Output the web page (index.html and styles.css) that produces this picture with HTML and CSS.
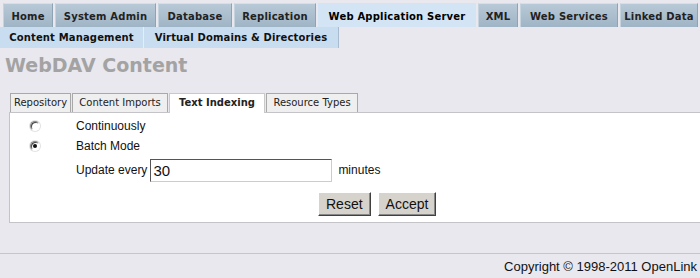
FILE: index.html
```html
<!DOCTYPE html>
<html lang="en">
<head>
    <meta charset="UTF-8">
    <title>WebDAV Content</title>
    <link rel="stylesheet" href="styles.css">
</head>
<body>
<div class="page">
    <ul class="tabs">
        <li>Home</li>
        <li>System Admin</li>
        <li>Database</li>
        <li>Replication</li>
        <li class="active">Web Application Server</li>
        <li>XML</li>
        <li>Web Services</li>
        <li>Linked Data</li>
    </ul>
    <ul class="subtabs">
        <li>Content Management</li>
        <li>Virtual Domains &amp; Directories</li>
    </ul>

    <h1 class="title">WebDAV Content</h1>

    <ul class="pagetabs">
        <li>Repository</li>
        <li>Content Imports</li>
        <li class="active">Text Indexing</li>
        <li>Resource Types</li>
    </ul>
    <div class="panel">
        <div class="row">
            <span class="radio"></span>
            <span>Continuously</span>
        </div>
        <div class="row">
            <span class="radio checked"></span>
            <span>Batch Mode</span>
        </div>
        <div class="row update">
            <span>Update every</span>
            <span class="field">30</span>
            <span>minutes</span>
        </div>
        <div class="buttons">
            <span class="btn">Reset</span>
            <span class="btn">Accept</span>
        </div>
    </div>

    <div class="footer">Copyright &copy; 1998-2011 OpenLink</div>
</div>
</body>
</html>
```

FILE: styles.css
```css
html,
body {
    margin: 0;
    padding: 0;
    overflow: hidden;
    background: #e9e8ee;
}

.page {
    width: 700px;
    padding-top: 3px;
}

/* top navigation */
.tabs,
.subtabs,
.pagetabs {
    list-style: none;
    margin: 0;
    padding: 0;
    display: flex;
}

.tabs {
    padding-left: 3px;
    gap: 2px;
}

.tabs li {
    flex: 0 0 auto;
    font-family: "DejaVu Sans", Verdana, sans-serif;
    font-weight: bold;
    font-size: 10px;
    letter-spacing: 0.2px;
    color: #222;
    height: 24px;
    line-height: 24px;
    padding-top: 1px;
    text-align: center;
    white-space: nowrap;
    box-sizing: border-box;
    background: linear-gradient(#b8c9d7, #9fb4c5);
    border-top: 1px solid #d4dfe8;
    border-left: 1px solid #c5d3de;
    border-right: 1px solid #8ea3b4;
}

.tabs li:nth-child(1) { width: 50px; }
.tabs li:nth-child(2) { width: 101px; }
.tabs li:nth-child(3) { width: 74px; }
.tabs li:nth-child(4) { width: 82px; }
.tabs li:nth-child(5) { width: 158px; }
.tabs li:nth-child(6) { width: 40px; }
.tabs li:nth-child(7) { width: 98px; }
.tabs li:nth-child(8) { width: 78px; }

.tabs li.active {
    background: #d3e5f4;
    border-color: #d3e5f4;
    color: #000;
}

.subtabs {
    height: 21px;
}

.subtabs li {
    font-family: "DejaVu Sans", Verdana, sans-serif;
    font-weight: bold;
    font-size: 10px;
    letter-spacing: 0.15px;
    color: #111;
    line-height: 21px;
    text-align: center;
    background: #c8ddef;
    border-right: 1px solid #a8bccd;
}

.subtabs li:nth-child(1) {
    width: 143px;
    border-right-color: #e4eef7;
}

.subtabs li:nth-child(2) {
    width: 194px;
}

.title {
    font-family: "DejaVu Sans", Verdana, sans-serif;
    font-size: 19px;
    color: #a3a3a3;
    margin: 5px 0 0 5px;
    height: 40px;
    line-height: 24px;
}

/* tabs over the panel */
.pagetabs {
    padding-left: 10px;
    height: 19px;
    gap: 1px;
}

.pagetabs li {
    font-family: "DejaVu Sans", Verdana, sans-serif;
    font-size: 10px;
    color: #222;
    height: 19px;
    line-height: 18px;
    text-align: center;
    white-space: nowrap;
    background: #efefef;
    border: 1px solid #a9a9a9;
    border-bottom: none;
    box-sizing: border-box;
}

.pagetabs li:nth-child(1) { width: 61px; }
.pagetabs li:nth-child(2) { width: 96px; }
.pagetabs li:nth-child(3) { width: 96px; }
.pagetabs li:nth-child(4) { width: 92px; }

.pagetabs li.active {
    font-weight: bold;
    background: #fff;
    height: 20px;
    margin-bottom: -1px;
    position: relative;
    border-color: #c9c9c9;
}

.panel {
    margin-left: 9px;
    background: #fff;
    border: 1px solid #c4c4c8;
    border-right: none;
    height: 111px;
    font-family: "Liberation Sans", Arial, sans-serif;
    font-size: 12px;
    color: #111;
    padding-top: 3px;
    box-sizing: border-box;
}

.row {
    display: flex;
    align-items: center;
    height: 20px;
    padding-left: 66px;
}

.row .radio {
    width: 8px;
    height: 8px;
    border-radius: 50%;
    border: 1px solid #fff;
    border-top-color: #8a8a8a;
    border-left-color: #8a8a8a;
    box-shadow: 0 0 0 1px #e2e2e2, inset 1px 1px 0 #444;
    margin-left: -46px;
    margin-right: 36px;
    background: #fff;
    position: relative;
}

.row .radio.checked::after {
    content: "";
    position: absolute;
    left: 2px;
    top: 2px;
    width: 4px;
    height: 4px;
    border-radius: 50%;
    background: #111;
}

.row.update {
    height: 24px;
    margin-top: 2px;
}

.field {
    width: 178px;
    height: 21px;
    margin: 0 6px 0 3px;
    border: 1px solid #ccc;
    border-top-color: #555;
    border-left-color: #555;
    font-size: 15px;
    line-height: 21px;
    padding-left: 2px;
}

.buttons {
    display: flex;
    gap: 7px;
    padding-left: 308px;
    margin-top: 10px;
}

.btn {
    font-size: 14px;
    height: 24px;
    line-height: 22px;
    padding: 0 7px;
    box-sizing: border-box;
    background: #d6d3cc;
    border: 1px solid #fff;
    border-right-color: #404040;
    border-bottom-color: #404040;
    box-shadow: inset -1px -1px 0 #888;
}

.footer {
    margin-top: 30px;
    border-top: 1px solid #c6c6ca;
    font-family: "Liberation Sans", Arial, sans-serif;
    font-size: 13px;
    color: #111;
    text-align: right;
    white-space: nowrap;
    padding: 5px 3px 0 0;
}
```
